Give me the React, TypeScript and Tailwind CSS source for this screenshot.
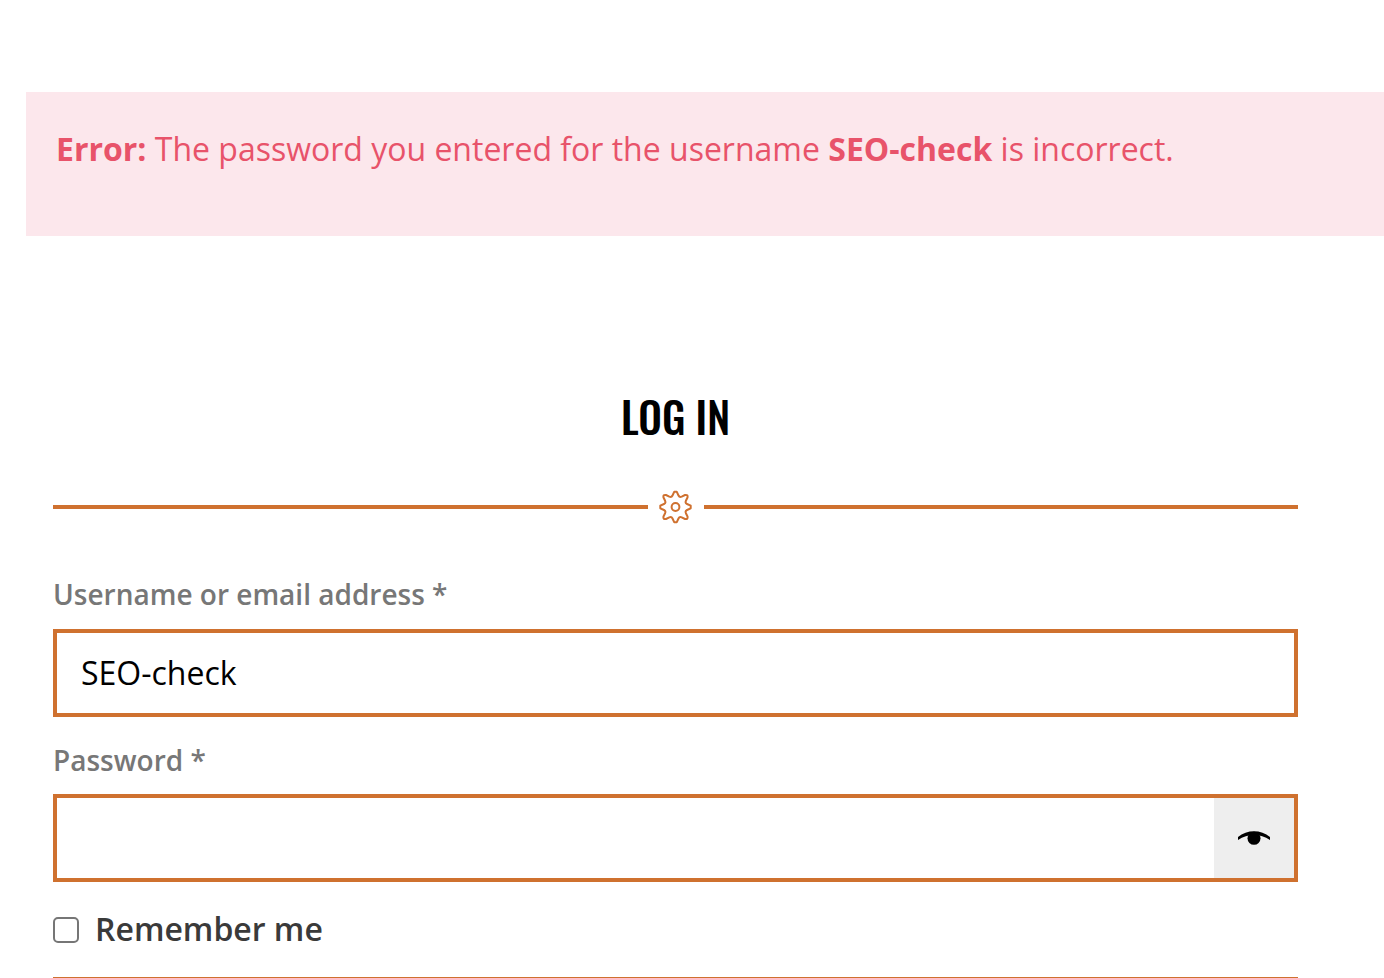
import { useState } from "react";

function GearIcon() {
  return (
    <svg viewBox="-17.500 -18 36 36" className="size-9 shrink-0" fill="none" stroke="#cf712f" strokeWidth="2" strokeLinejoin="round" aria-hidden="true">
      <path d="M-1.3-15.2H1.3L3-11.500Q4-9.400 6.200-10.400L9.500-12Q12.600-12.600 12-9.500L10.400-6.200Q9.400-4 11.500-3L15.2-1.3V1.3L11.500 3Q9.400 4 10.400 6.200L12 9.500Q12.600 12.600 9.500 12L6.200 10.400Q4 9.400 3 11.500L1.3 15.2H-1.3L-3 11.500Q-4 9.400-6.200 10.400L-9.500 12Q-12.600 12.600-12 9.500L-10.400 6.200Q-9.400 4-11.500 3L-15.2 1.3V-1.3L-11.500-3Q-9.400-4-10.400-6.200L-12-9.500Q-12.600-12.600-9.500-12L-6.200-10.400Q-4-9.400-3-11.500Z" />
      <circle r="3.900" />
    </svg>
  );
}

function EyeIcon() {
  return (
    <svg viewBox="0 0 32 16" className="h-4 w-8" aria-hidden="true">
      <path d="M0 7C9-.8 23-.8 32 7V10C22 3.200 10 3.200 0 10Z" fill="#000" />
      <circle cx="16" cy="8.300" r="6.500" fill="#000" />
    </svg>
  );
}

export default function App() {
  const [username, setUsername] = useState("SEO-check");
  const [password, setPassword] = useState("");
  const [visible, setVisible] = useState(false);

  return (
    <main className="bg-white pt-[92px] font-['Open_Sans','Noto_Sans',sans-serif] text-black">
      <div role="alert" className="ml-[26px] bg-[#fce7ec] px-[30px] pt-[33px] pb-[63px] text-[32px] leading-12 text-[#e8536a]">
        <p>
          <strong className="font-bold">Error:</strong> The password you entered for the username{" "}
          <strong className="font-bold">SEO-check</strong> is incorrect.
        </p>
      </div>

      <form className="mt-[150px] mr-[86px] ml-[53px]" onSubmit={(e) => e.preventDefault()}>
        <h1 className="text-center font-['Oswald','Liberation_Sans_Narrow','Liberation_Sans',sans-serif] text-[42px] leading-[60px] font-medium">LOG IN</h1>
        <div className="mt-[43px] flex items-center gap-[10px]">
          <span className="h-1 flex-1 bg-[#cf712f]" />
          <GearIcon />
          <span className="h-1 flex-1 bg-[#cf712f]" />
        </div>

        <label htmlFor="username" className="mt-[49px] block text-[28px] leading-10 font-semibold text-[#777]">
          Username or email address *
        </label>
        <input
          id="username"
          type="text"
          value={username}
          onChange={(e) => setUsername(e.target.value)}
          className="mt-[15px] block h-[88px] w-full border-4 border-[#cf712f] px-6 pb-0.5 text-[32px] outline-none"
        />

        <label htmlFor="password" className="mt-[23px] block text-[28px] leading-10 font-semibold text-[#777]">
          Password *
        </label>
        <div className="mt-[14px] flex h-[88px] border-4 border-[#cf712f]">
          <input
            id="password"
            type={visible ? "text" : "password"}
            value={password}
            onChange={(e) => setPassword(e.target.value)}
            className="min-w-0 flex-1 px-6 pb-0.5 text-[32px] outline-none"
          />
          <button type="button" aria-label="Show password" onClick={() => setVisible(!visible)} className="flex w-20 items-center justify-center bg-[#eee]">
            <EyeIcon />
          </button>
        </div>

        <div className="mt-6 flex items-center gap-4">
          <input id="remember" type="checkbox" className="size-[26px] appearance-none rounded-[5px] border-2 border-[#767676] checked:bg-[#cf712f]" />
          <label htmlFor="remember" className="pb-0.5 text-[32px] leading-[46px] font-semibold text-[#3a3a3a]">
            Remember me
          </label>
        </div>
        <hr className="mt-[23px] border-t border-[#cf712f]" />
      </form>
    </main>
  );
}
